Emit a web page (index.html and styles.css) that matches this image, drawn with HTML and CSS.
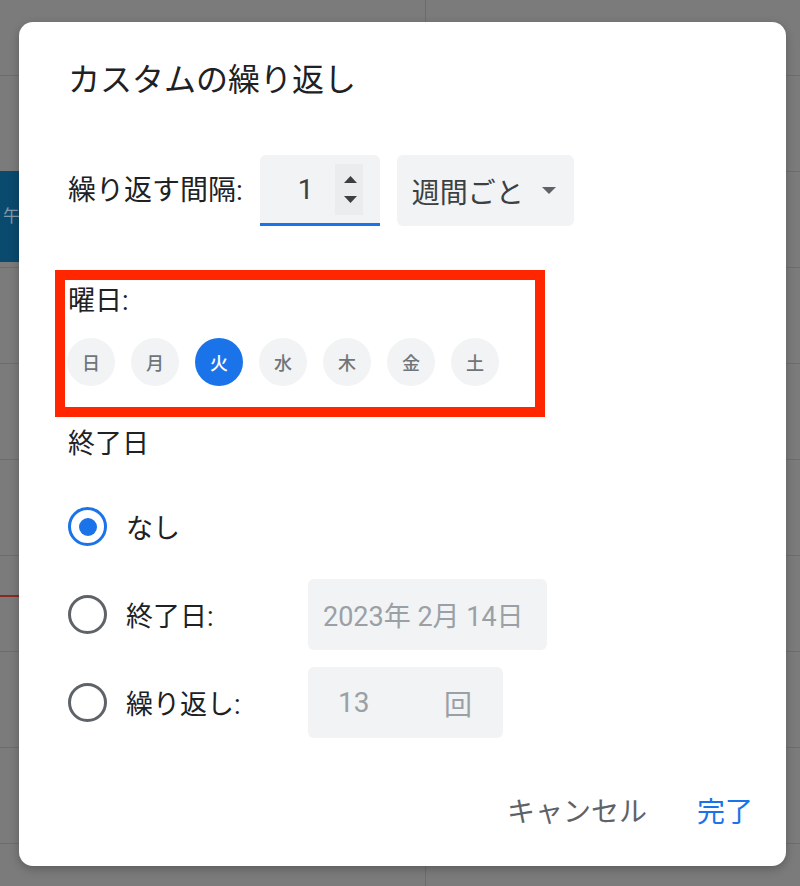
FILE: index.html
```html
<!DOCTYPE html>
<html lang="ja">
<head>
    <meta charset="UTF-8">
    <meta name="viewport" content="width=device-width, initial-scale=1.0">
    <title>カスタムの繰り返し</title>
    <link rel="stylesheet" href="styles.css">
</head>
<body>
    <div class="screen">
        <!-- calendar behind the scrim -->
        <div class="calendar-bg">
            <div class="event">午前</div>
            <div class="now-line"></div>
        </div>

        <div class="dialog">
            <h2 class="dialog-title">カスタムの繰り返し</h2>

            <div class="interval-row">
                <span class="label">繰り返す間隔:</span>
                <div class="number-field">
                    <span class="number-value">1</span>
                    <svg class="spinner" width="28" height="51" viewBox="0 0 28 51">
                        <polygon points="9,19 22,19 15.5,12" fill="#3c4043"/>
                        <polygon points="9,32 22,32 15.5,39" fill="#3c4043"/>
                    </svg>
                </div>
                <div class="select-field">
                    <span>週間ごと</span>
                    <svg class="caret" width="14" height="7" viewBox="0 0 14 7">
                        <polygon points="0,0 14,0 7,7" fill="#5f6368"/>
                    </svg>
                </div>
            </div>

            <div class="weekday-box">
                <div class="label">曜日:</div>
                <div class="weekdays">
                    <span class="day">日</span>
                    <span class="day">月</span>
                    <span class="day selected">火</span>
                    <span class="day">水</span>
                    <span class="day">木</span>
                    <span class="day">金</span>
                    <span class="day">土</span>
                </div>
            </div>

            <div class="label end-title">終了日</div>

            <div class="end-options">
                <div class="option"><span class="radio checked"></span><span>なし</span></div>
                <div></div>

                <div class="option"><span class="radio"></span><span>終了日:</span></div>
                <div class="text-field date-field">2023年 2月 14日</div>

                <div class="option"><span class="radio"></span><span>繰り返し:</span></div>
                <div class="text-field count-field"><span>13</span><span>回</span></div>
            </div>

            <div class="actions">
                <button class="btn btn-cancel">キャンセル</button>
                <button class="btn btn-done">完了</button>
            </div>
        </div>
    </div>
</body>
</html>
```

FILE: styles.css
```css
:root {
    --blue: #1a73e8;
    --field-bg: #f1f3f4;
    --text: #3c4043;
    --text-dark: #202124;
    --text-muted: #5f6368;
    --scrim-line: #6d6d6d;
}

html, body {
    margin: 0;
    padding: 0;
    background: #7b7b7b;
    font-family: Roboto, "Noto Sans CJK JP", sans-serif;
    overflow: hidden;
}

.screen {
    position: relative;
    height: 886px;
    padding: 22px 0 0 19px;
    box-sizing: border-box;
}

.calendar-bg {
    position: absolute;
    top: 0;
    left: 0;
    width: 100%;
    height: 100%;
    background-image:
        linear-gradient(to right, transparent 425px, var(--scrim-line) 425px, var(--scrim-line) 426px, transparent 426px),
        repeating-linear-gradient(to bottom, transparent 0 75px, var(--scrim-line) 75px 76px, transparent 76px 96px);
}

.event {
    position: absolute;
    top: 171px;
    left: 0;
    width: 80px;
    height: 91px;
    padding: 34px 0 0 3px;
    box-sizing: border-box;
    background: #0a4a6e;
    color: #8299a8;
    font-size: 17px;
    line-height: 22px;
}

.now-line {
    position: absolute;
    top: 595px;
    left: 0;
    width: 40px;
    height: 2px;
    background: #8c2a22;
}

.dialog {
    position: relative;
    z-index: 1;
    width: 767px;
    height: 844px;
    padding: 40px 21px 29px 49px;
    box-sizing: border-box;
    background: white;
    border-radius: 14px;
    box-shadow: 0 3px 10px rgba(0, 0, 0, 0.25);
    display: flex;
    flex-direction: column;
    color: var(--text);
}

.dialog-title {
    margin: 0;
    font-size: 32px;
    font-weight: 400;
    line-height: 36px;
    color: var(--text-dark);
}

.label {
    font-size: 27px;
    line-height: 32px;
    color: var(--text-dark);
}

.interval-row {
    display: flex;
    align-items: center;
    height: 71px;
    margin-top: 57px;
}

.interval-row .label {
    font-size: 28px;
    margin-right: 17px;
}

.number-field {
    display: flex;
    align-items: center;
    width: 120px;
    height: 71px;
    box-sizing: border-box;
    background: var(--field-bg);
    border-radius: 6px 6px 0 0;
    border-bottom: 3px solid var(--blue);
    margin-right: 17px;
}

.number-value {
    flex: 1;
    padding-left: 38px;
    font-size: 28px;
    color: var(--text);
}

.spinner {
    margin-right: 17px;
    background: #eaecee;
}

.select-field {
    display: flex;
    align-items: center;
    height: 71px;
    padding: 0 18px 0 15px;
    background: var(--field-bg);
    border-radius: 6px;
    font-size: 28px;
    color: var(--text);
}

.caret {
    margin-left: 18px;
}

.weekday-box {
    width: 490px;
    margin: 44px 0 0 -13px;
    padding: 5px 0 21px 2px;
    box-sizing: border-box;
    border: 10px solid #ff2600;
}

.weekday-box .label {
    padding-left: 1px;
}

.weekdays {
    display: flex;
    gap: 16px;
    margin-top: 21px;
}

.day {
    width: 48px;
    height: 48px;
    border-radius: 50%;
    background: var(--field-bg);
    color: #70757a;
    font-size: 18px;
    font-weight: 500;
    display: flex;
    align-items: center;
    justify-content: center;
}

.day.selected {
    background: var(--blue);
    color: white;
}

.end-title {
    margin-top: 11px;
}

.end-options {
    display: grid;
    grid-template-columns: 240px auto;
    grid-auto-rows: 71px;
    row-gap: 17px;
    margin-top: 31px;
    justify-items: start;
}

.option {
    display: flex;
    align-items: center;
    gap: 19px;
    font-size: 27px;
    color: var(--text-dark);
}

.radio {
    width: 39px;
    height: 39px;
    box-sizing: border-box;
    border: 3px solid var(--text-muted);
    border-radius: 50%;
    display: flex;
    align-items: center;
    justify-content: center;
}

.radio.checked {
    border-color: var(--blue);
}

.radio.checked::after {
    content: "";
    width: 18px;
    height: 18px;
    border-radius: 50%;
    background: var(--blue);
}

.text-field {
    display: flex;
    align-items: center;
    height: 71px;
    box-sizing: border-box;
    background: var(--field-bg);
    border-radius: 6px;
    font-size: 27px;
    color: #9aa0a6;
}

.date-field {
    width: 239px;
    padding: 0 15px;
}

.count-field {
    width: 195px;
    padding: 0 31px 0 30px;
    justify-content: space-between;
    font-size: 28px;
}

.actions {
    margin-top: auto;
    display: flex;
    justify-content: flex-end;
    gap: 26px;
}

.btn {
    font-family: inherit;
    font-size: 28px;
    line-height: 32px;
    padding: 8px 12px;
    background: none;
    border: none;
    cursor: pointer;
}

.btn-cancel {
    color: var(--text-muted);
}

.btn-done {
    color: var(--blue);
}
```
